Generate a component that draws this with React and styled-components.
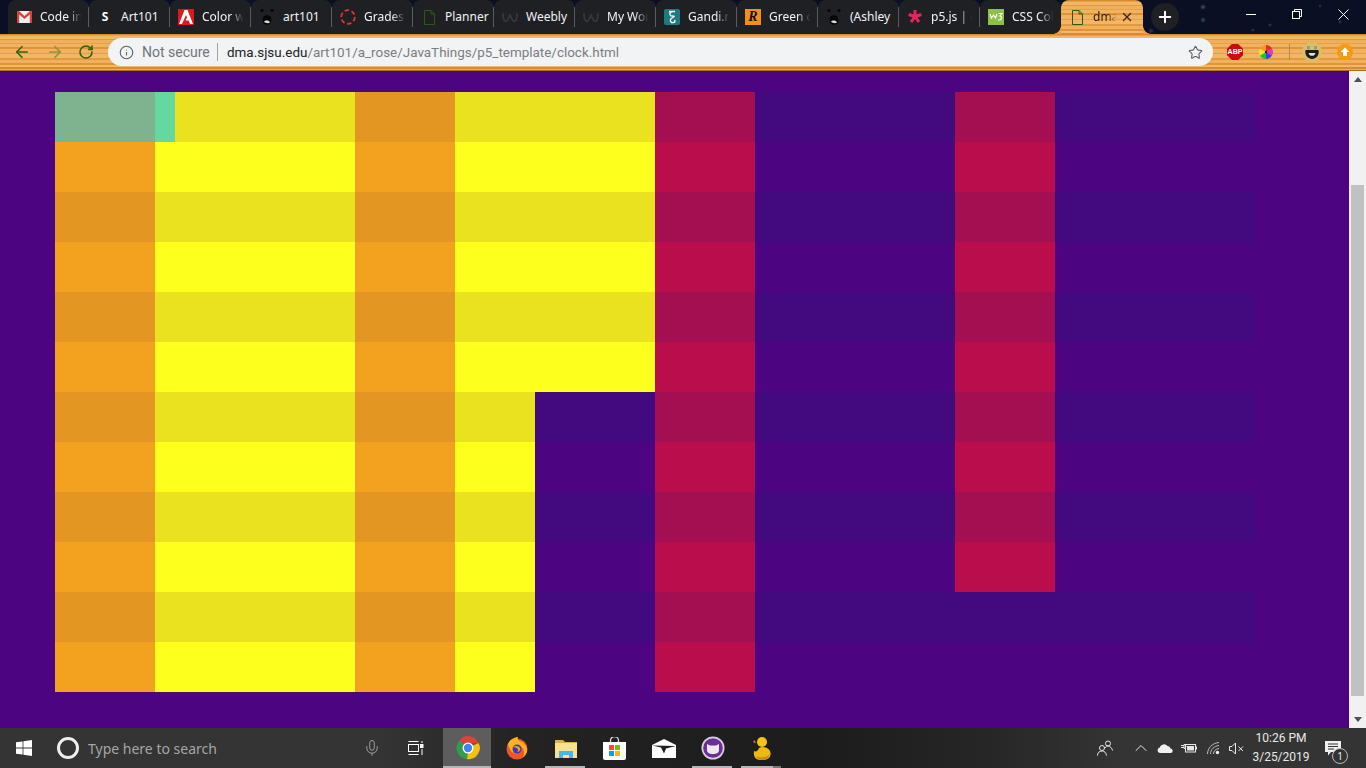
import React from 'react';
import styled, { createGlobalStyle } from 'styled-components';
import { ArrowLeft, ArrowRight, RotateCw, Info, Star, Plus, X, Mic, ChevronUp } from 'lucide-react';

const WOOD = `linear-gradient(180deg, #d68c30 0 1px, #e6a248 1px 2px, #f1b666 2px 5px, #e39b3f 5px 6px, #eeb05c 6px 9px, #e6a247 9px 10px, #f0b364 10px 13px, #df9536 13px 15px, #f0b363 15px 19px, #e59f41 19px 20px, #f1b668 20px 24px, #e39a3b 24px 26px, #efb160 26px 29px, #df9536 29px 31px, #f2b96e 31px 33px, #d68d32 33px 35px, #eeae5c 35px 36px)`;

const Global = createGlobalStyle`
  html, body { margin: 0; padding: 0; overflow: hidden; background: #4c0480; }
  * { box-sizing: border-box; }
`;

const Screen = styled.div`
  width: 1366px; height: 768px; display: flex; flex-direction: column; overflow: hidden;
  font-family: "Noto Sans", "Open Sans", sans-serif;
`;

const TitleBar = styled.div`
  height: 34px; flex: none; display: flex; padding-left: 8px;
  background:
    radial-gradient(circle 3px at 1203px 7px, #44546f 0, transparent 100%),
    radial-gradient(circle 3px at 1203px 20px, #3a4a66 0, transparent 100%),
    radial-gradient(circle 3px at 1151px 31px, #2f3d58 0, transparent 100%),
    radial-gradient(circle 2px at 1253px 30px, #2f3d58 0, transparent 100%),
    radial-gradient(circle 2px at 1270px 25px, #33425f 0, transparent 100%),
    radial-gradient(circle 2px at 1340px 22px, #33425f 0, transparent 100%),
    radial-gradient(circle 2px at 1320px 6px, #2b3854 0, transparent 100%),
    #0a0f24;
`;

const TabStrip = styled.div`
  display: flex; height: 34px;
`;

const Tab = styled.div`
  width: 81px; height: 34px; flex: none; display: flex; align-items: center; position: relative;
  padding-left: 8px; gap: 8px; overflow: hidden;
  background: #1f2024; border-radius: 8px 8px 0 0;
  &:not(:last-child)::after {
    content: ""; position: absolute; right: 0; top: 7px; bottom: 7px; width: 1px; background: #5b5c60;
  }
`;

const ActiveTab = styled.div`
  width: 82px; height: 34px; flex: none; display: flex; align-items: center; position: relative;
  padding-left: 8px; gap: 8px; border-radius: 8px 8px 0 0;
  background: ${WOOD};
  &::before, &::after {
    content: ""; position: absolute; bottom: 0; width: 8px; height: 8px;
  }
  &::before { left: -8px; background: radial-gradient(circle at 0 0, transparent 7.500px, #e6a247 8px); }
  &::after { right: -8px; background: radial-gradient(circle at 100% 0, transparent 7.500px, #e6a247 8px); }
`;

const FavBox = styled.span`
  width: 16px; height: 16px; flex: none; display: flex; align-items: center; justify-content: center;
`;

const TabLabel = styled.span`
  font-size: 12px; line-height: 16px; white-space: nowrap; width: 45px;
  color: #f1f3f4;
  ${p => p.$full ? '' : `
    -webkit-mask-image: linear-gradient(90deg, #000 62%, transparent 92%);
    mask-image: linear-gradient(90deg, #000 62%, transparent 92%);
  `}
`;

const ActiveLabel = styled.span`
  font-size: 12px; line-height: 16px; white-space: nowrap; width: 24px; color: #2b2010;
  -webkit-mask-image: linear-gradient(90deg, #000 60%, transparent 100%);
  mask-image: linear-gradient(90deg, #000 60%, transparent 100%);
`;

const ActiveClose = styled.span`
  position: absolute; right: 9px; top: 10px; display: flex; color: #3a2a12;
`;

const NewTab = styled.div`
  width: 28px; height: 28px; border-radius: 50%; background: #1f2024; color: #fff; flex: none;
  margin: 3px 0 0 8px; display: flex; align-items: center; justify-content: center;
`;

const WindowControls = styled.div`
  margin-left: auto; display: flex; height: 28px;
`;

const WinButton = styled.div`
  width: 46px; height: 28px; display: flex; align-items: center; justify-content: center;
`;

const Toolbar = styled.div`
  height: 37px; flex: none; display: flex; align-items: center; padding: 0 0 0 8px; position: relative;
  border-bottom: 1px solid #a8701f;
  background: ${WOOD};
`;

const NavButton = styled.div`
  width: ${p => p.$w || 28}px; height: 28px; flex: none; margin-right: ${p => p.$mr ?? 5}px;
  display: flex; align-items: center; justify-content: center;
  color: ${p => p.$off ? '#8f9140' : '#33630f'};
`;

const Omnibox = styled.div`
  width: 1105px; height: 28px; flex: none; border-radius: 14px; background: #f1f3f4;
  display: flex; align-items: center; padding: 0 10px 0 11px;
`;

const InfoIcon = styled.span`
  display: flex; color: #5f6368; margin-right: 8px;
`;

const Secure = styled.span`
  font-family: Roboto, sans-serif; font-size: 14px; color: #70757a; width: 76px; border-right: 1px solid #a0a3a6; line-height: 18px; white-space: nowrap;
`;

const Url = styled.span`
  font-family: Roboto, sans-serif; font-size: 13.450px; color: #7a7e83; margin-left: 9px; flex: 1; white-space: nowrap;
  b { font-weight: 400; color: #202124; }
`;

const Extensions = styled.div`
  display: flex; align-items: center; flex: 1; padding-left: 14px; height: 28px;
`;

const AbpBadge = styled.span`
  width: 16px; height: 16px; flex: none; background: #c70d0d; color: #fff; font-size: 7px; font-weight: 700;
  font-family: "Liberation Sans", sans-serif; line-height: 16px; text-align: center;
  clip-path: polygon(30% 0, 70% 0, 100% 30%, 100% 70%, 70% 100%, 30% 100%, 0 70%, 0 30%);
`;

const ExtSlot = styled.span`
  width: ${p => p.$w || 32}px; flex: none; display: flex; align-items: center; justify-content: center;
`;

const ExtDivider = styled.span`
  width: 1px; height: 16px; background: #b58a4d; margin-right: 5px; flex: none;
`;

const Body = styled.div`
  flex: 1; display: flex; min-height: 0; background: #4c0480;
`;

const Page = styled.div`
  flex: 1; padding: 21px 0 0 55px;
`;

const Board = styled.div`
  width: 1200px; display: flex; flex-direction: column;
`;

const Row = styled.div`
  display: flex; height: 50px;
`;

const Seg = styled.div`
  flex: none; height: 50px; background: ${p => p.$c};
`;

const ScrollBar = styled.div`
  width: 17px; flex: none; background: #f1f1f1; display: flex; flex-direction: column; align-items: center; position: relative;
`;

const ArrowBox = styled.div`
  height: 17px; flex: none; display: flex; align-items: center; justify-content: center;
`;

const Thumb = styled.div`
  width: 13px; height: 511px; background: #c1c1c1; margin-top: 97px; margin-bottom: auto;
`;

const Taskbar = styled.div`
  height: 40px; flex: none; display: flex; align-items: stretch;
  background: linear-gradient(90deg, #343434 0, #343434 28%, #232323 38%, #1c1c1c 60%, #262626 72%, #343434 82%, #343434 100%);
  color: #fff;
`;

const StartButton = styled.div`
  width: 48px; display: flex; align-items: center; justify-content: center; flex: none;
`;

const SearchArea = styled.div`
  width: 348px; flex: none; display: flex; align-items: center; padding-left: 9px; position: relative;
`;

const CortanaRing = styled.span`
  width: 22px; height: 22px; border-radius: 50%; border: 3px solid #eee; flex: none; margin-right: 9px;
`;

const SearchText = styled.span`
  font-size: 14px; color: #a6a6a6; white-space: nowrap;
`;

const MicWrap = styled.span`
  position: absolute; left: 315px; top: 11px; display: flex; color: #a6a6a6;
`;

const TaskViewBtn = styled.div`
  width: 47px; flex: none; display: flex; align-items: center; padding-left: 12px;
`;

const AppBtn = styled.div`
  width: 49px; flex: none; display: flex; align-items: center; justify-content: center; position: relative;
`;

const ChromeBtn = styled(AppBtn)`
  background: linear-gradient(90deg, #5d5d5d 0 48px, transparent 48px);
  &::after { content: ""; position: absolute; left: 0; width: 48px; bottom: 0; height: 2px; background: #b5b5b5; }
`;

const OpenBtn = styled(AppBtn)`
  &::after { content: ""; position: absolute; left: 4px; width: 40px; bottom: 0; height: 2px; background: #b5b5b5; }
`;

const StackedBtn = styled(AppBtn)`
  &::after { content: ""; position: absolute; left: 4px; width: 32px; bottom: 0; height: 2px; background: #b5b5b5; }
  &::before { content: ""; position: absolute; left: 36px; width: 8px; bottom: 0; height: 2px; background: #777; }
`;

const Tray = styled.div`
  margin-left: auto; display: flex; align-items: center; color: #e8e8e8; padding-right: 15px;
`;

const TrayIcon = styled.span`
  width: ${p => p.$w || 24}px; display: flex; align-items: center; justify-content: center; flex: none;
`;

const Clock = styled.div`
  width: 68px; text-align: center; font-family: Roboto, sans-serif; font-size: 12px; line-height: 19px; color: #e8e8e8; flex: none; white-space: nowrap;
`;

const Notif = styled.span`
  width: 36px; display: flex; justify-content: center; position: relative;
`;

const NotifBadge = styled.span`
  position: absolute; left: 17px; top: 8px; width: 16px; height: 16px; border-radius: 50%;
  background: #333; border: 1px solid #bbb; color: #eee; font-size: 10px; line-height: 14px; text-align: center;
`;

const LetterFav = styled.span`
  font-size: ${p => p.$s || 12}px; font-weight: 700; color: ${p => p.$c || '#fff'};
  font-family: ${p => p.$serif ? '"Liberation Serif", serif' : '"Noto Sans", sans-serif'};
  font-style: ${p => p.$serif ? 'italic' : 'normal'};
  line-height: 16px;
`;

const FilledFav = styled(FavBox)`
  background: ${p => p.$c}; border-radius: ${p => p.$r || 0}px;
`;

const Gmail = () => (
  <svg width="15" height="12" viewBox="0 0 15 12"><rect width="15" height="12" fill="#eee"/><path d="M0 0h2l5.500 5L13 0h2v12h-2.200V3.400L7.500 8 2.200 3.400V12H0z" fill="#d1453b"/></svg>
);
const Adobe = () => (
  <svg width="16" height="16" viewBox="0 0 16 16"><rect width="16" height="16" fill="#e2161d"/><path d="M6.500 1h3L15 15h-3l-1.300-3.500H7.500L9 8.500 8 6 4 15H1z" fill="#fff"/></svg>
);
const Bear = () => (
  <svg width="16" height="18" viewBox="0 0 16 18"><circle cx="3" cy="2.500" r="1.600" fill="#060606"/><circle cx="13" cy="2.500" r="1.600" fill="#060606"/><ellipse cx="8" cy="12" rx="4.500" ry="4.800" fill="#050505"/><path d="M5 14c1-2 5-2 6 .5-2 1-4 .8-6-.5z" fill="#ddd"/></svg>
);
const Grades = () => (
  <svg width="16" height="16" viewBox="0 0 16 16"><circle cx="8" cy="8" r="6.800" fill="none" stroke="#e5352b" strokeWidth="1.800" strokeDasharray="4.500 2.600"/></svg>
);
const Doc = ({ c = '#2c5a12' }) => (
  <svg width="11" height="15" viewBox="0 0 11 15"><path d="M.5.500h6.500l3.500 3.500v10.500H.5z M7 .5v3.500h3.500" fill="none" stroke={c} strokeWidth="1"/></svg>
);
const Weebly = () => (
  <svg width="17" height="12" viewBox="0 0 17 12"><path d="M1 2c0 6 1 8.500 3 8.500S6.500 8 8.500 4C10.500 8 11 10.500 13 10.500S16 8 16 2" fill="none" stroke="#33383d" strokeWidth="2"/></svg>
);
const Gandi = () => (
  <FilledFav $c="#1f7a80" $r={2}>
    <svg width="10" height="14" viewBox="0 0 10 14"><path d="M2 1.500h6M6 1.500C2 2 2 6 5 6c3 0 3 0 1 1.500C2 9 3 13 6 12.500c2 0 2.500-1.500 1.500-2.500" fill="none" stroke="#fff" strokeWidth="1.300"/></svg>
  </FilledFav>
);
const Asterisk = () => (
  <svg width="16" height="16" viewBox="0 0 16 16"><path d="M6.500 1h3v4.600l4.300-1.500 1 2.900-4.400 1.400 2.800 3.700-2.500 1.800L8 10.100l-2.700 3.800-2.500-1.800 2.800-3.700L1.200 7l1-2.900 4.300 1.500z" fill="#ed225d"/></svg>
);
const W3 = () => (
  <FilledFav $c="#8cc14a">
    <svg width="14" height="10" viewBox="0 0 14 10"><path d="M1 2l1.500 4L4.500 3l2 3L8 2M9.500 1.500H13L11 4c2 0 2 4-.5 4H9" fill="none" stroke="#fff" strokeWidth="1.200"/></svg>
  </FilledFav>
);

const MinIcon = () => <svg width="10" height="1" viewBox="0 0 10 1"><rect width="10" height="1" fill="#fff"/></svg>;
const RestoreIcon = () => (
  <svg width="10" height="10" viewBox="0 0 10 10" fill="none" stroke="#fff" strokeWidth="1"><rect x=".5" y="2.500" width="7" height="7"/><path d="M2.500 2.500v-2h7v7h-2"/></svg>
);
const CloseIcon = () => (
  <svg width="11" height="11" viewBox="0 0 11 11" fill="none" stroke="#fff" strokeWidth="1"><path d="M.5.500l10 10M10.500.5l-10 10"/></svg>
);

const WinLogo = () => (
  <svg width="16" height="16" viewBox="0 0 16 16"><path d="M0 2.300l6.600-.9v6.200H0zM7.400 1.300L16 0v7.600H7.400zM0 8.400h6.600v6.200L0 13.700zM7.400 8.400H16V16l-8.600-1.300z" fill="#fff"/></svg>
);
const TaskView = () => (
  <svg width="16" height="16" viewBox="0 0 16 16" fill="none" stroke="#fff" strokeWidth="1"><path d="M.5 1.500h10M.5 14.500h10"/><rect x=".5" y="4.500" width="10" height="7"/><rect x="12.500" y="4.500" width="2.500" height="3" fill="#fff"/><path d="M14 1v2M14 9v6"/></svg>
);
const ChromeIcon = () => (
  <svg width="24" height="24" viewBox="0 0 24 24">
    <path d="M12 12L3.500 4.500A11 11 0 0 1 22.500 7H12z" fill="#db4437"/>
    <path d="M12 12L22.500 7A11 11 0 0 1 11 23z" fill="#f4c20d"/>
    <path d="M12 12l-1 11A11 11 0 0 1 3.500 4.500z" fill="#2f9e4f"/>
    <circle cx="12" cy="12" r="5.500" fill="#fff"/><circle cx="12" cy="12" r="4.200" fill="#4285f4"/>
  </svg>
);
const Firefox = () => (
  <svg width="24" height="24" viewBox="0 0 24 24">
    <circle cx="12" cy="13" r="10.500" fill="#f0542b"/>
    <path d="M3 8c2-5 7-7 10-7-1 2 0 3 2 4 4 1 7 5 7 9 0 3-2 6-4 7 2-4 1-9-3-11-2 1-5 1-6 3 2-1 5 0 5 2s-3 3-5 2c-3-1-5-4-6-9z" fill="#ffb21e"/>
    <circle cx="12" cy="13" r="4.500" fill="#3d3fa8"/>
    <path d="M8 11c2-2 6-1 7 1s-1 4-3 4c3-2 0-5-4-5z" fill="#ff9a20"/>
  </svg>
);
const Explorer = () => (
  <svg width="22" height="19" viewBox="0 0 22 19">
    <path d="M0 1h8l2 2h12v3H0z" fill="#d9b04a"/>
    <rect y="4" width="22" height="15" fill="#fbe08e"/>
    <path d="M4 19v-7h14v7h-4v-3H8v3z" fill="#45b7ec"/>
  </svg>
);
const Store = () => (
  <svg width="23" height="23" viewBox="0 0 23 23">
    <path d="M7.500 6V3.500a4 4 0 0 1 8 0V6" fill="none" stroke="#ddd" strokeWidth="1.300"/>
    <path d="M0 5h23v16a2 2 0 0 1-2 2H2a2 2 0 0 1-2-2z" fill="#fff"/>
    <rect x="6" y="8" width="5" height="5" fill="#f25022"/><rect x="12" y="8" width="5" height="5" fill="#7fba00"/>
    <rect x="6" y="14" width="5" height="5" fill="#00a4ef"/><rect x="12" y="14" width="5" height="5" fill="#ffb900"/>
  </svg>
);
const Mail = () => (
  <svg width="24" height="19" viewBox="0 0 24 19">
    <path d="M0 6L12 0l12 6v13H0z" fill="#fff"/>
    <path d="M0 6.500L24 7l-10 2.500-2 5-3-6z" fill="#1e1e1e"/>
  </svg>
);
const Cat = () => (
  <svg width="24" height="24" viewBox="0 0 24 24">
    <circle cx="12" cy="12" r="11.500" fill="#d9d3df"/><circle cx="12" cy="12" r="9.800" fill="#6b2f96"/>
    <path d="M6 8l3 1.500h6L18 8v6c0 3-3 4-6 4s-6-1-6-4z" fill="#efeaf2"/>
  </svg>
);
const Duck = () => (
  <svg width="18" height="24" viewBox="0 0 18 24">
    <circle cx="9" cy="6" r="5" fill="#f2c417"/>
    <path d="M1.500 4l-1.500 2 3 1.500z" fill="#d9811a"/>
    <path d="M1 15c2 1 4 0 5-3 3-2 9-1 11 3 2 5-1 9-8 9-6 0-9-3-8-9z" fill="#edba12"/>
    <path d="M3 20c4 2 10 2 14-2-1 4-4 6-8 6-3 0-5-2-6-4z" fill="#c98f0e"/>
  </svg>
);
const PeopleIcon = () => (
  <svg width="16" height="16" viewBox="0 0 16 16" fill="none" stroke="#e8e8e8" strokeWidth="1"><circle cx="5" cy="8" r="2.500"/><path d="M.5 15.500c0-3 2-4.500 4.500-4.500S9 12.500 9.500 15.500"/><circle cx="11" cy="3.500" r="2.500"/><path d="M8 8c1-2 2-2 3-2 2 0 4 2 4.500 4.500"/></svg>
);
const OneDrive = () => (
  <svg width="17" height="9" viewBox="0 0 17 9"><path d="M3 9a2.800 2.800 0 0 1-.3-5.500A4.500 4.500 0 0 1 10.500 2a3 3 0 0 1 3 2.500A2.300 2.300 0 0 1 14 9z" fill="#f0f0f0"/></svg>
);
const BatteryIcon = () => (
  <svg width="16" height="10" viewBox="0 0 16 10"><path d="M0 2.500h3M0 4.500h3M3 1.500h1.500v4H3zM4.500 3.500h1" stroke="#e8e8e8" strokeWidth="1" fill="none"/><rect x="4.500" y="1.500" width="10" height="7.500" fill="none" stroke="#e8e8e8"/><rect x="6" y="3" width="7" height="4.500" fill="#e8e8e8"/><rect x="15" y="3.500" width="1" height="3" fill="#e8e8e8"/></svg>
);
const WifiIcon = () => (
  <svg width="13" height="13" viewBox="0 0 13 13" fill="none" stroke="#bdbdbd" strokeWidth="1"><path d="M.5 12C.5 6 5.500 1 12 .5M3.500 12c0-4.500 3.500-8 8.500-8.500M6.500 12c0-2.800 2-5 5.500-5.500"/><circle cx="10.500" cy="10.500" r="1.700" fill="#f0f0f0" stroke="none"/></svg>
);
const VolumeIcon = () => (
  <svg width="15" height="13" viewBox="0 0 15 13" fill="none" stroke="#e8e8e8" strokeWidth="1"><path d="M.5 4.500h2.500l3.500-3.500v11L3 8.500H.5z"/><path d="M9.500 4.500l4.500 4.500M14 4.500L9.500 9"/></svg>
);
const BubbleIcon = () => (
  <svg width="16" height="16" viewBox="0 0 16 16"><path d="M0 1h16v11H6l-3 3.500V12H0z" fill="#f0f0f0"/><path d="M3 4h10M3 6.500h10M3 9h6" stroke="#333" strokeWidth="1"/></svg>
);
const Avatar = () => (
  <svg width="20" height="20" viewBox="0 0 20 20">
    <circle cx="10" cy="10" r="10" fill="#dcbd68"/>
    <path d="M3.500 8h13c1 5.500-2.500 9-6.500 9s-7.500-3.500-6.500-9z" fill="#1c1c1c"/>
    <path d="M5 4h3v3.500H5zM12 4h3v3.500h-3z" fill="#8aa0a8"/>
    <path d="M6.500 11h7c-.5 2-1.800 2.800-3.500 2.800S7 13 6.500 11z" fill="#e8e0c8"/>
  </svg>
);
const Wheel = () => (
  <svg width="16" height="16" viewBox="0 0 16 16">
    <path d="M8 8V1a7 7 0 0 1 6 3.500z" fill="#e52b2b"/><path d="M8 8l6-3.500A7 7 0 0 1 14 11.500z" fill="#e532c8"/>
    <path d="M8 8l6 3.500A7 7 0 0 1 8 15z" fill="#3848e0"/><path d="M8 8v7a7 7 0 0 1-6-3.500z" fill="#1fc23c"/>
    <path d="M8 8l-6 3.500A7 7 0 0 1 2 4.500z" fill="#e9e928"/><path d="M8 8L2 4.500A7 7 0 0 1 8 1z" fill="#f59a1b"/>
    <circle cx="8" cy="8" r="1.200" fill="#222"/>
  </svg>
);
const Update = () => (
  <svg width="16" height="16" viewBox="0 0 16 16">
    <circle cx="8" cy="8" r="8" fill="#f59a14"/>
    <path d="M8 3.500L12.500 8H10v4H6V8H3.500z" fill="#fff"/>
  </svg>
);

const TABS = [
  ['Code in', <Gmail />], ['Art101', <LetterFav>S</LetterFav>, true], ['Color w', <Adobe />], ['art101', <Bear />, true],
  ['Grades', <Grades />], ['Planner', <Doc />, true], ['Weebly', <Weebly />, true], ['My Wor', <Weebly />],
  ['Gandi.n', <Gandi />], ['Green c', <FilledFav $c="#f18f1c"><LetterFav $c="#111" $s={14} $serif>R</LetterFav></FilledFav>],
  ['(Ashley', <Bear />, true], ['p5.js | e', <Asterisk />], ['CSS Col', <W3 />],
];

const C = {
  orange: ['#e49622', '#f3a21f'],
  yellow: ['#ebe21f', '#fdff1c'],
  crimson: ['#a30f50', '#b90d4c'],
  dim: ['#430a80', '#4c0480'],
};

const rowSegments = (r) => {
  const d = r % 2 === 0 ? 0 : 1;
  const segs = r === 0
    ? [[100, '#7fb28e'], [20, '#64d99f'], [180, C.yellow[0]]]
    : [[100, C.orange[d]], [200, C.yellow[d]]];
  segs.push([100, C.orange[d]]);
  if (r < 6) segs.push([200, C.yellow[d]]);
  else segs.push([80, C.yellow[d]], [120, C.dim[d]]);
  segs.push([100, C.crimson[d]], [200, C.dim[d]]);
  segs.push([100, r < 10 ? C.crimson[d] : C.dim[d]]);
  segs.push([200, C.dim[d]]);
  return segs;
};

const ROWS = Array.from({ length: 12 }, (_, r) => rowSegments(r));

export default function App() {
  return (
    <Screen>
      <Global />
      <TitleBar>
        <TabStrip>
          {TABS.map(([label, fav, full]) => (
            <Tab key={label}>
              <FavBox>{fav}</FavBox>
              <TabLabel $full={full}>{label}</TabLabel>
            </Tab>
          ))}
        </TabStrip>
        <ActiveTab>
          <FavBox><Doc /></FavBox>
          <ActiveLabel>dma</ActiveLabel>
          <ActiveClose><X size={14} strokeWidth={2.400} /></ActiveClose>
        </ActiveTab>
        <NewTab><Plus size={18} strokeWidth={2.600} /></NewTab>
        <WindowControls>
          <WinButton><MinIcon /></WinButton>
          <WinButton><RestoreIcon /></WinButton>
          <WinButton><CloseIcon /></WinButton>
        </WindowControls>
      </TitleBar>
      <Toolbar>
        <NavButton><ArrowLeft size={18} strokeWidth={2.200} /></NavButton>
        <NavButton $off><ArrowRight size={18} strokeWidth={2.200} /></NavButton>
        <NavButton $w={24} $mr={10}><RotateCw size={16} strokeWidth={2.400} /></NavButton>
        <Omnibox>
          <InfoIcon><Info size={15} strokeWidth={1.800} /></InfoIcon>
          <Secure>Not secure</Secure>
          <Url><b>dma.sjsu.edu</b>/art101/a_rose/JavaThings/p5_template/clock.html</Url>
          <Star size={15} strokeWidth={1.800} color="#5f6368" />
        </Omnibox>
        <Extensions>
          <AbpBadge>ABP</AbpBadge>
          <ExtSlot $w={46}><Wheel /></ExtSlot>
          <ExtDivider />
          <ExtSlot $w={34}><Avatar /></ExtSlot>
          <ExtSlot $w={32}><Update /></ExtSlot>
        </Extensions>
      </Toolbar>
      <Body>
        <Page>
          <Board>
            {ROWS.map((segs, r) => (
              <Row key={r}>
                {segs.map(([w, c], i) => <Seg key={i} $c={c} style={{ width: w }} />)}
              </Row>
            ))}
          </Board>
        </Page>
        <ScrollBar>
          <ArrowBox><svg width="8" height="5" viewBox="0 0 8 5"><path d="M4 0l4 5H0z" fill="#505050"/></svg></ArrowBox>
          <Thumb />
          <ArrowBox><svg width="8" height="5" viewBox="0 0 8 5"><path d="M0 0h8L4 5z" fill="#505050"/></svg></ArrowBox>
        </ScrollBar>
      </Body>
      <Taskbar>
        <StartButton><WinLogo /></StartButton>
        <SearchArea>
          <CortanaRing />
          <SearchText>Type here to search</SearchText>
          <MicWrap><Mic size={18} strokeWidth={1.200} /></MicWrap>
        </SearchArea>
        <TaskViewBtn><TaskView /></TaskViewBtn>
        <ChromeBtn><ChromeIcon /></ChromeBtn>
        <AppBtn><Firefox /></AppBtn>
        <OpenBtn><Explorer /></OpenBtn>
        <AppBtn><Store /></AppBtn>
        <AppBtn><Mail /></AppBtn>
        <OpenBtn><Cat /></OpenBtn>
        <StackedBtn><Duck /></StackedBtn>
        <Tray>
          <TrayIcon $w={48}><PeopleIcon /></TrayIcon>
          <TrayIcon><ChevronUp size={20} strokeWidth={1.200} /></TrayIcon>
          <TrayIcon><OneDrive /></TrayIcon>
          <TrayIcon><BatteryIcon /></TrayIcon>
          <TrayIcon><WifiIcon /></TrayIcon>
          <TrayIcon $w={22}><VolumeIcon /></TrayIcon>
          <Clock>10:26 PM<br />3/25/2019</Clock>
          <Notif>
            <BubbleIcon />
            <NotifBadge>1</NotifBadge>
          </Notif>
        </Tray>
      </Taskbar>
    </Screen>
  );
}
